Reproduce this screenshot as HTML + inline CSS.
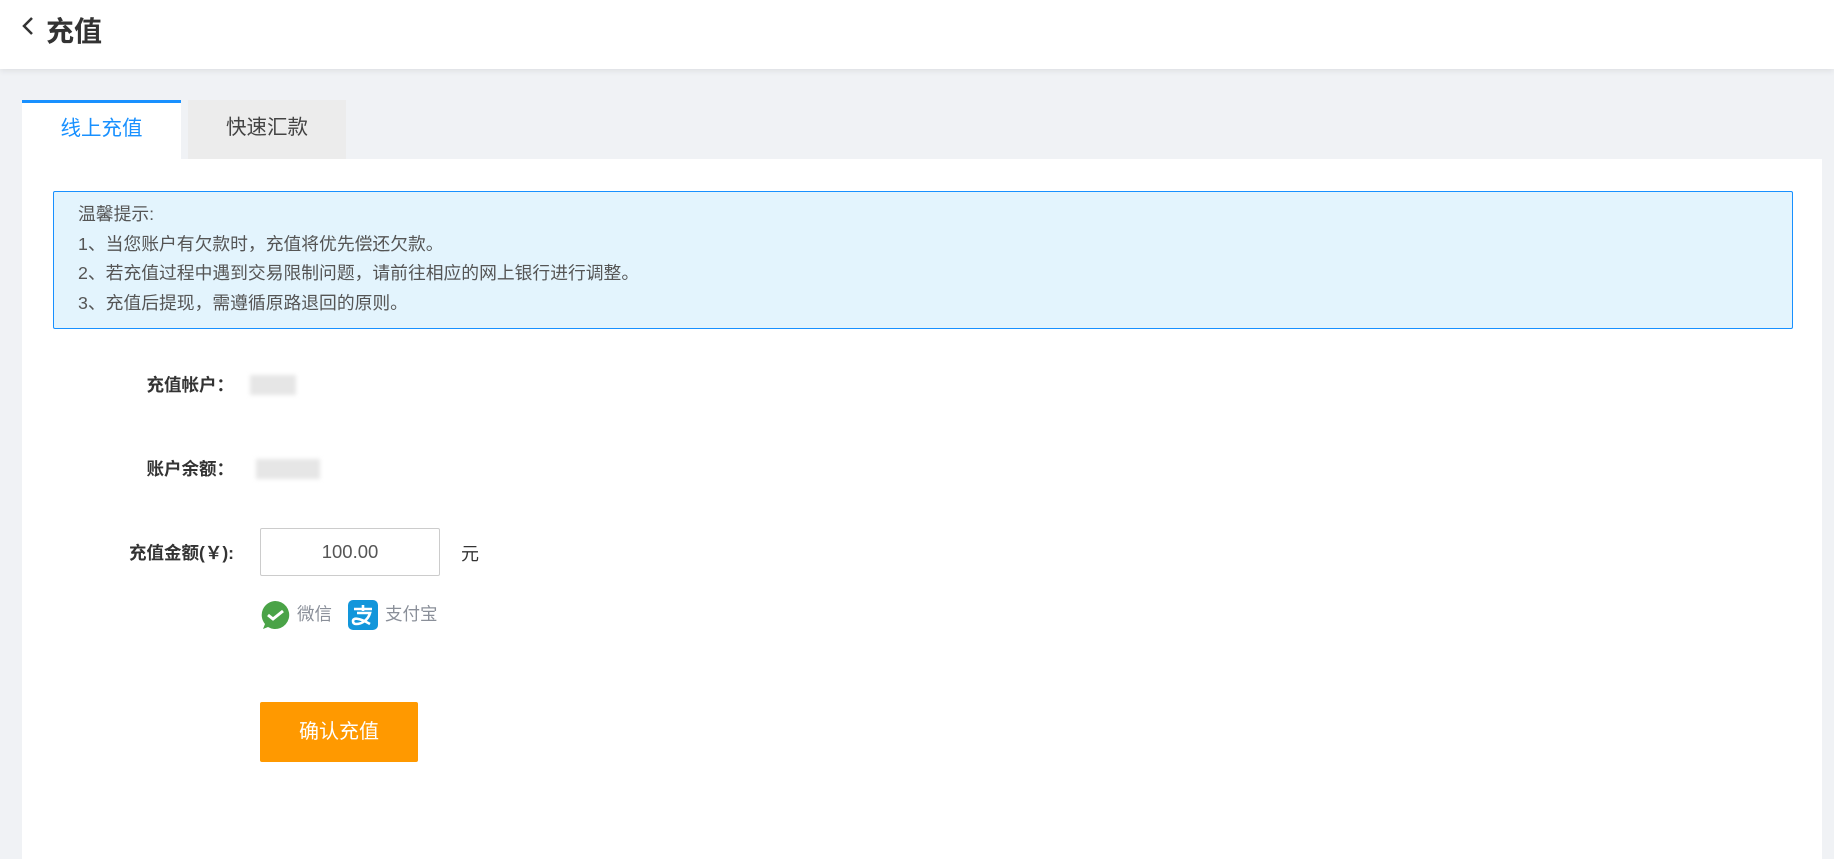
<!DOCTYPE html>
<html><head><meta charset="utf-8"><style>
*{margin:0;padding:0;box-sizing:border-box}
body{width:1834px;height:852px;overflow:hidden;background:#f0f2f5;font-family:"Liberation Sans","Noto Sans CJK SC",sans-serif;position:relative}
.hdr{position:absolute;left:0;top:0;width:1834px;height:69px;background:#fff;box-shadow:0 2px 6px rgba(0,0,0,.08)}
.hdr .t{position:absolute;left:46px;top:10px;font-size:28px;font-weight:bold;color:#333}
.tab1{position:absolute;left:22px;top:100px;width:159px;height:60px;background:#fff;border-top:3px solid #1890ff;color:#1890ff;font-size:20.5px;text-align:center;line-height:52px}
.tab2{position:absolute;left:188px;top:100px;width:158px;height:59px;background:#ececec;color:#444;font-size:20.5px;text-align:center;line-height:56px}
.panel{position:absolute;left:22px;top:159px;width:1800px;height:700px;background:#fff}
.note{position:absolute;left:53px;top:191px;width:1740px;height:138px;background:#e3f4fd;border:1px solid #1890ff;border-radius:2px;padding:8px 0 0 24px;color:#555;font-size:17.8px;line-height:29.5px}
.lab{position:absolute;right:1600px;font-size:17.5px;font-weight:bold;color:#333;white-space:nowrap}
.blur{position:absolute;background:#e6e6e6;filter:blur(2px);height:20px}
.inp{position:absolute;left:260px;top:528px;width:180px;height:48px;border:1px solid #ccc;border-radius:2px;text-align:center;line-height:46px;font-size:18.5px;color:#555}
.btn{position:absolute;left:260px;top:702px;width:158px;height:60px;background:#ff9900;border-radius:2px;color:#fff;font-size:20px;text-align:center;line-height:60px}
.pt{position:absolute;top:601px;font-size:17.5px;color:#8a8f99}
</style></head><body>
<div class="hdr">
<svg style="position:absolute;left:20px;top:15px" width="16" height="22" viewBox="0 0 16 22"><path d="M12 3 L4 11 L12 19" fill="none" stroke="#333" stroke-width="2.5"/></svg>
<div class="t">充值</div></div>
<div class="tab1">线上充值</div>
<div class="tab2">快速汇款</div>
<div class="panel"></div>
<div class="note">温馨提示:<br>1、当您账户有欠款时，充值将优先偿还欠款。<br>2、若充值过程中遇到交易限制问题，请前往相应的网上银行进行调整。<br>3、充值后提现，需遵循原路退回的原则。</div>
<div class="lab" style="top:372px">充值帐户：</div>
<div class="blur" style="left:250px;top:375px;width:46px"></div>
<div class="lab" style="top:456px">账户余额：</div>
<div class="blur" style="left:256px;top:459px;width:64px"></div>
<div class="lab" style="top:540px">充值金额(￥):</div>
<div class="inp">100.00</div>
<div style="position:absolute;left:461px;top:540px;font-size:18px;color:#333">元</div>
<svg style="position:absolute;left:260px;top:600px" width="30" height="30" viewBox="0 0 30 30"><path d="M15 1a14 14 0 1 1-7 26l-5 2 2-5A14 14 0 0 1 15 1z" fill="#4aa347"/><path d="M8 15l5 4 10-8" fill="none" stroke="#fff" stroke-width="3"/></svg>
<div class="pt" style="left:297px">微信</div>
<svg style="position:absolute;left:348px;top:600px" width="30" height="30" viewBox="0 0 30 30"><rect width="30" height="30" rx="5" fill="#1296db"/><path d="M6 9h18M15 5v6M9 13h13c-2 7-8 11-14 11-2 0-3-1-3-3 0-3 5-4 17 3" fill="none" stroke="#fff" stroke-width="2.6"/></svg>
<div class="pt" style="left:385px">支付宝</div>
<div class="btn">确认充值</div>
</body></html>
